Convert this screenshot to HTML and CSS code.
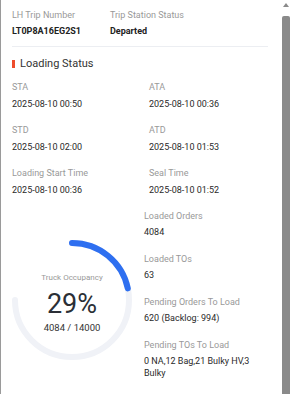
FILE: index.html
```html
<!DOCTYPE html>
<html>
<head>
<meta charset="utf-8">
<link rel="stylesheet" href="styles.css">
</head>
<body>
<div class="frame">
  <div class="panel">
    <div class="header">
      <div class="field hcol1">
        <div class="label">LH Trip Number</div>
        <div class="value strong">LT0P8A16EG2S1</div>
      </div>
      <div class="field">
        <div class="label">Trip Station Status</div>
        <div class="value strong">Departed</div>
      </div>
    </div>
    <div class="divider"></div>
    <div class="title"><span class="bar"></span><span>Loading Status</span></div>
    <div class="times">
      <div class="field"><div class="label">STA</div><div class="value">2025-08-10 00:50</div></div>
      <div class="field"><div class="label">ATA</div><div class="value">2025-08-10 00:36</div></div>
      <div class="field"><div class="label">STD</div><div class="value">2025-08-10 02:00</div></div>
      <div class="field"><div class="label">ATD</div><div class="value">2025-08-10 01:53</div></div>
      <div class="field"><div class="label">Loading Start Time</div><div class="value">2025-08-10 00:36</div></div>
      <div class="field"><div class="label">Seal Time</div><div class="value">2025-08-10 01:52</div></div>
    </div>
    <div class="lower">
      <div class="gauge">
        <svg class="ring" width="120" height="120" viewBox="0 0 120 120">
          <path d="M60 3 A57 57 0 1 1 3 60" fill="none" stroke="#f0f2f7" stroke-width="6" stroke-linecap="round"/>
          <path d="M60 3 A57 57 0 0 1 115.8 48.4" fill="none" stroke="#2e6ff0" stroke-width="6" stroke-linecap="round"/>
        </svg>
        <div class="gauge-text">
          <div class="g-label">Truck Occupancy</div>
          <div class="g-pct">29%</div>
          <div class="g-count">4084 / 14000</div>
        </div>
      </div>
      <div class="stats">
        <div class="field"><div class="label">Loaded Orders</div><div class="value">4084</div></div>
        <div class="field"><div class="label">Loaded TOs</div><div class="value">63</div></div>
        <div class="field"><div class="label">Pending Orders To Load</div><div class="value">620 (Backlog: 994)</div></div>
        <div class="field"><div class="label">Pending TOs To Load</div><div class="value">0 NA,12 Bag,21 Bulky HV,3 Bulky</div></div>
      </div>
    </div>
  </div>
  <div class="scrollbar">
    <div class="arrow"></div>
    <div class="thumb"></div>
  </div>
</div>
</body>
</html>
```

FILE: styles.css
```css
* { box-sizing: border-box; }
html, body {
  margin: 0;
  padding: 0;
  background: #ffffff;
}
body {
  width: 290px;
  height: 394px;
  overflow: hidden;
  font-family: Roboto, "Liberation Sans", sans-serif;
  color: #333;
}
.frame {
  display: flex;
  height: 394px;
}
.panel {
  flex: 0 0 280px;
  border-left: 1px solid #9a9a9a;
  padding: 8.5px 12px 0 11px;
}
.header {
  display: flex;
}
.hcol1 {
  width: 98px;
}
.label {
  font-size: 9px;
  line-height: 13px;
  color: #999;
  white-space: nowrap;
}
.value {
  margin-top: 3.5px;
  font-size: 9px;
  line-height: 12px;
  color: #2a2a2a;
}
.value.strong {
  font-weight: 700;
  color: #222;
}
.divider {
  margin-top: 8.5px;
  border-top: 1px solid #eceef2;
}
.title {
  margin-top: 9px;
  display: flex;
  align-items: center;
  gap: 5px;
  font-size: 11px;
  line-height: 16px;
  color: #333;
}
.bar {
  width: 3px;
  height: 8px;
  background: #ee4d2d;
}
.times {
  margin-top: 9.5px;
  display: grid;
  grid-template-columns: 137px 1fr;
  row-gap: 14.5px;
}
.lower {
  margin-top: 14px;
  display: grid;
  grid-template-columns: 132px 1fr;
}
.stats {
  display: flex;
  flex-direction: column;
  gap: 14.5px;
}
.gauge {
  margin-top: 30px;
  width: 120px;
  height: 120px;
  display: grid;
}
.ring, .gauge-text {
  grid-area: 1 / 1;
}
.ring {
  display: block;
}
.gauge-text {
  display: flex;
  flex-direction: column;
  align-items: center;
  padding-top: 33px;
}
.g-label {
  font-size: 8px;
  line-height: 10px;
  color: #999;
}
.g-pct {
  margin-top: 6px;
  font-size: 27px;
  line-height: 30px;
  color: #2b2f36;
}
.g-count {
  margin-top: 3px;
  font-size: 9.5px;
  line-height: 12px;
  color: #333;
}
.scrollbar {
  flex: 0 0 10px;
  display: flex;
  flex-direction: column;
  align-items: flex-end;
  padding-top: 3px;
}
.arrow {
  width: 0;
  height: 0;
  margin-right: 1px;
  border-left: 3.5px solid transparent;
  border-right: 3.5px solid transparent;
  border-bottom: 4px solid #8a8a8a;
}
.thumb {
  margin-top: 9px;
  width: 8px;
  flex: 1;
  background: #8a8a8a;
  border-radius: 2px 2px 0 0;
}
```
